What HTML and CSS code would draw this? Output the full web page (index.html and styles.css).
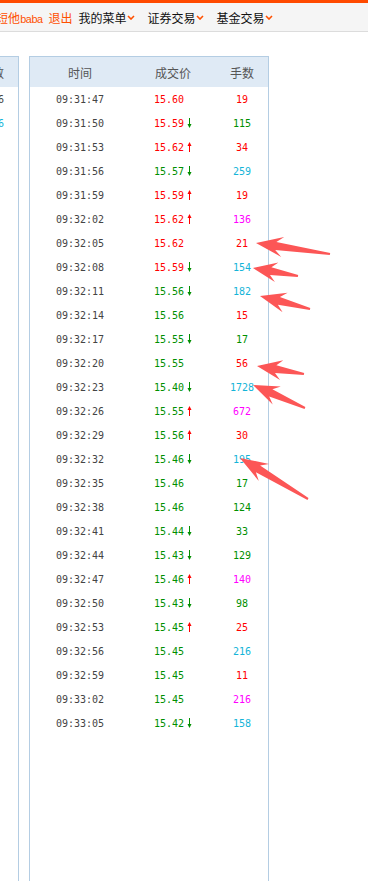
FILE: index.html
```html
<!DOCTYPE html>
<html lang="zh-CN">
<head>
<meta charset="utf-8">
<title>分时成交</title>
<link rel="stylesheet" href="styles.css">
</head>
<body>
<div class="topbar">
  <span class="user">短他<span class="latin">baba</span></span>
  <span class="logout">退出</span>
  <span class="menu">我的菜单<svg class="chev" width="8" height="5" viewBox="0 0 8 5"><polyline points="1,1 4,4 7,1" fill="none" stroke="#ff5000" stroke-width="1.6"/></svg></span>
  <span class="menu">证券交易<svg class="chev" width="8" height="5" viewBox="0 0 8 5"><polyline points="1,1 4,4 7,1" fill="none" stroke="#ff5000" stroke-width="1.6"/></svg></span>
  <span class="menu">基金交易<svg class="chev" width="8" height="5" viewBox="0 0 8 5"><polyline points="1,1 4,4 7,1" fill="none" stroke="#ff5000" stroke-width="1.6"/></svg></span>
</div>

<div class="board">
  <div class="tbl">
    <div class="thead"><span>时间</span><span>价格</span><span>手数</span></div>
    <div class="row"><span class="t">09:31:44</span><span class="p k">15.60<i class="ph"></i></span><span class="v k">1726</span></div>
    <div class="row"><span class="t">09:31:41</span><span class="p r">15.59<i class="ph"></i></span><span class="v c">2156</span></div>
  </div>

  <div class="tbl">
    <div class="thead"><span>时间</span><span>成交价</span><span>手数</span></div>
    <div class="row"><span class="t">09:31:47</span><span class="p r">15.60<i class="ph"></i></span><span class="v r">19</span></div>
    <div class="row"><span class="t">09:31:50</span><span class="p r">15.59<svg class="ar g" width="5" height="10" viewBox="0 0 5 10"><rect x="2" y="0" width="1" height="7" fill="currentColor"/><polygon points="0.5,6 2.5,10 4.5,6" fill="currentColor"/></svg></span><span class="v g">115</span></div>
    <div class="row"><span class="t">09:31:53</span><span class="p r">15.62<svg class="ar r" width="5" height="10" viewBox="0 0 5 10"><rect x="2" y="3" width="1" height="7" fill="currentColor"/><polygon points="0.5,4 2.5,0 4.5,4" fill="currentColor"/></svg></span><span class="v r">34</span></div>
    <div class="row"><span class="t">09:31:56</span><span class="p g">15.57<svg class="ar g" width="5" height="10" viewBox="0 0 5 10"><rect x="2" y="0" width="1" height="7" fill="currentColor"/><polygon points="0.5,6 2.5,10 4.5,6" fill="currentColor"/></svg></span><span class="v c">259</span></div>
    <div class="row"><span class="t">09:31:59</span><span class="p r">15.59<svg class="ar r" width="5" height="10" viewBox="0 0 5 10"><rect x="2" y="3" width="1" height="7" fill="currentColor"/><polygon points="0.5,4 2.5,0 4.5,4" fill="currentColor"/></svg></span><span class="v r">19</span></div>
    <div class="row"><span class="t">09:32:02</span><span class="p r">15.62<svg class="ar r" width="5" height="10" viewBox="0 0 5 10"><rect x="2" y="3" width="1" height="7" fill="currentColor"/><polygon points="0.5,4 2.5,0 4.5,4" fill="currentColor"/></svg></span><span class="v m">136</span></div>
    <div class="row"><span class="t">09:32:05</span><span class="p r">15.62<i class="ph"></i></span><span class="v r">21</span></div>
    <div class="row"><span class="t">09:32:08</span><span class="p r">15.59<svg class="ar g" width="5" height="10" viewBox="0 0 5 10"><rect x="2" y="0" width="1" height="7" fill="currentColor"/><polygon points="0.5,6 2.5,10 4.5,6" fill="currentColor"/></svg></span><span class="v c">154</span></div>
    <div class="row"><span class="t">09:32:11</span><span class="p g">15.56<svg class="ar g" width="5" height="10" viewBox="0 0 5 10"><rect x="2" y="0" width="1" height="7" fill="currentColor"/><polygon points="0.5,6 2.5,10 4.5,6" fill="currentColor"/></svg></span><span class="v c">182</span></div>
    <div class="row"><span class="t">09:32:14</span><span class="p g">15.56<i class="ph"></i></span><span class="v r">15</span></div>
    <div class="row"><span class="t">09:32:17</span><span class="p g">15.55<svg class="ar g" width="5" height="10" viewBox="0 0 5 10"><rect x="2" y="0" width="1" height="7" fill="currentColor"/><polygon points="0.5,6 2.5,10 4.5,6" fill="currentColor"/></svg></span><span class="v g">17</span></div>
    <div class="row"><span class="t">09:32:20</span><span class="p g">15.55<i class="ph"></i></span><span class="v r">56</span></div>
    <div class="row"><span class="t">09:32:23</span><span class="p g">15.40<svg class="ar g" width="5" height="10" viewBox="0 0 5 10"><rect x="2" y="0" width="1" height="7" fill="currentColor"/><polygon points="0.5,6 2.5,10 4.5,6" fill="currentColor"/></svg></span><span class="v c">1728</span></div>
    <div class="row"><span class="t">09:32:26</span><span class="p g">15.55<svg class="ar r" width="5" height="10" viewBox="0 0 5 10"><rect x="2" y="3" width="1" height="7" fill="currentColor"/><polygon points="0.5,4 2.5,0 4.5,4" fill="currentColor"/></svg></span><span class="v m">672</span></div>
    <div class="row"><span class="t">09:32:29</span><span class="p g">15.56<svg class="ar r" width="5" height="10" viewBox="0 0 5 10"><rect x="2" y="3" width="1" height="7" fill="currentColor"/><polygon points="0.5,4 2.5,0 4.5,4" fill="currentColor"/></svg></span><span class="v r">30</span></div>
    <div class="row"><span class="t">09:32:32</span><span class="p g">15.46<svg class="ar g" width="5" height="10" viewBox="0 0 5 10"><rect x="2" y="0" width="1" height="7" fill="currentColor"/><polygon points="0.5,6 2.5,10 4.5,6" fill="currentColor"/></svg></span><span class="v c">195</span></div>
    <div class="row"><span class="t">09:32:35</span><span class="p g">15.46<i class="ph"></i></span><span class="v g">17</span></div>
    <div class="row"><span class="t">09:32:38</span><span class="p g">15.46<i class="ph"></i></span><span class="v g">124</span></div>
    <div class="row"><span class="t">09:32:41</span><span class="p g">15.44<svg class="ar g" width="5" height="10" viewBox="0 0 5 10"><rect x="2" y="0" width="1" height="7" fill="currentColor"/><polygon points="0.5,6 2.5,10 4.5,6" fill="currentColor"/></svg></span><span class="v g">33</span></div>
    <div class="row"><span class="t">09:32:44</span><span class="p g">15.43<svg class="ar g" width="5" height="10" viewBox="0 0 5 10"><rect x="2" y="0" width="1" height="7" fill="currentColor"/><polygon points="0.5,6 2.5,10 4.5,6" fill="currentColor"/></svg></span><span class="v g">129</span></div>
    <div class="row"><span class="t">09:32:47</span><span class="p g">15.46<svg class="ar r" width="5" height="10" viewBox="0 0 5 10"><rect x="2" y="3" width="1" height="7" fill="currentColor"/><polygon points="0.5,4 2.5,0 4.5,4" fill="currentColor"/></svg></span><span class="v m">140</span></div>
    <div class="row"><span class="t">09:32:50</span><span class="p g">15.43<svg class="ar g" width="5" height="10" viewBox="0 0 5 10"><rect x="2" y="0" width="1" height="7" fill="currentColor"/><polygon points="0.5,6 2.5,10 4.5,6" fill="currentColor"/></svg></span><span class="v g">98</span></div>
    <div class="row"><span class="t">09:32:53</span><span class="p g">15.45<svg class="ar r" width="5" height="10" viewBox="0 0 5 10"><rect x="2" y="3" width="1" height="7" fill="currentColor"/><polygon points="0.5,4 2.5,0 4.5,4" fill="currentColor"/></svg></span><span class="v r">25</span></div>
    <div class="row"><span class="t">09:32:56</span><span class="p g">15.45<i class="ph"></i></span><span class="v c">216</span></div>
    <div class="row"><span class="t">09:32:59</span><span class="p g">15.45<i class="ph"></i></span><span class="v r">11</span></div>
    <div class="row"><span class="t">09:33:02</span><span class="p g">15.45<i class="ph"></i></span><span class="v m">216</span></div>
    <div class="row"><span class="t">09:33:05</span><span class="p g">15.42<svg class="ar g" width="5" height="10" viewBox="0 0 5 10"><rect x="2" y="0" width="1" height="7" fill="currentColor"/><polygon points="0.5,6 2.5,10 4.5,6" fill="currentColor"/></svg></span><span class="v c">158</span></div>
  </div>
</div>

<svg class="marks" width="368" height="881" viewBox="0 0 368 881">
  <g fill="#fc5656">
    <polygon points="256,243 284.2,237.1 276.4,241.9 330.2,253 329.8,255 275.2,249.9 281.2,256.9"/>
    <polygon points="253,268 278.4,262.4 271.4,267.2 298.2,275 297.8,277 270,275.1 274.9,282.1"/>
    <polygon points="260,296 287.6,292.8 279.9,297 310.3,308 309.8,310 277.9,304.8 282.6,312.2"/>
    <polygon points="257,366 283.3,360.3 276.4,365.3 304.2,373 303.8,375 275,373.1 280,380.1"/>
    <polygon points="253,385 280.8,386.4 272.4,389.2 305.4,407.1 304.6,408.9 269.2,396.6 272.7,404.6"/>
    <polygon points="240,458 269.1,463.9 260.1,465.4 308.5,498.1 307.5,499.9 255.9,472.2 258.8,481"/>
  </g>
</svg>
</body>
</html>
```

FILE: styles.css
```css
* {
  box-sizing: border-box;
}

html,
body {
  margin: 0;
  padding: 0;
  background: #fff;
  overflow: hidden;
}

body {
  position: relative;
  width: 368px;
  height: 881px;
  font-family: "Noto Sans CJK SC", sans-serif;
  font-size: 12px;
}

.topbar {
  display: flex;
  align-items: center;
  height: 32px;
  border-top: 3px solid #ff4a00;
  border-bottom: 1px solid #dcdcdc;
  background: #f5f5f5;
  white-space: nowrap;
  overflow: hidden;
}

.user {
  margin-left: -4px;
  color: #ff5000;
}

.latin {
  font-family: "Liberation Mono", monospace;
  font-size: 11px;
  letter-spacing: -1px;
}

.logout {
  margin-left: 6px;
  color: #ff5000;
}

.menu {
  display: flex;
  align-items: center;
  margin-left: 6px;
  color: #111;
}

.menu + .menu {
  margin-left: 12px;
}

.chev {
  margin-left: 1px;
}

.board {
  display: flex;
  gap: 10px;
  margin-top: 24px;
  margin-left: -221px;
}

.tbl {
  flex: none;
  width: 240px;
  height: 840px;
  border: 1px solid #b4cde3;
  background: #fff;
}

.thead {
  display: grid;
  grid-template-columns: 100px 86px 52px;
  align-items: center;
  height: 30px;
  background: #dfeaf5;
  color: #555;
  text-align: center;
}

.row {
  display: grid;
  grid-template-columns: 100px 86px 52px;
  align-items: center;
  height: 24px;
  font-family: "DejaVu Sans Mono", monospace;
  font-size: 10px;
}

.t {
  text-align: center;
  color: #444;
}

.p {
  display: flex;
  justify-content: center;
  align-items: center;
  gap: 3px;
}

.ph {
  display: block;
  width: 5px;
  height: 10px;
}

.ar {
  display: block;
}

.v {
  text-align: center;
}

.r { color: #ff0000; }
.g { color: #008f00; }
.c { color: #14b4d8; }
.m { color: #ff00ff; }
.k { color: #444; }

.marks {
  position: absolute;
  left: 0;
  top: 0;
  pointer-events: none;
}
```
